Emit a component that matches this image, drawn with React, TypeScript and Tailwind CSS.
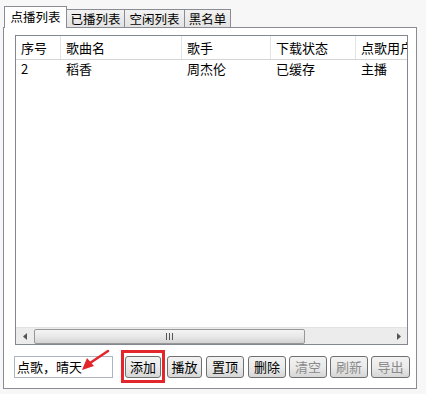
import React from "react";

const cols = [
  { name: "序号", w: 45 },
  { name: "歌曲名", w: 121 },
  { name: "歌手", w: 89 },
  { name: "下载状态", w: 85 },
  { name: "点歌用户", w: 60 },
];
const row = ["2", "稻香", "周杰伦", "已缓存", "主播"];

function Btn({ label, w, faded }: { label: string; w: string; faded?: boolean }) {
  return (
    <div
      className={`${w} h-[22px] shrink-0 flex items-center justify-center rounded-[3px] border border-[#707070] bg-gradient-to-b from-[#f2f2f2] via-[#ebebeb] to-[#d6d6d6] text-[13px] leading-[16px] ${
        faded ? "text-[#8a8a8a]" : "text-black"
      }`}
    >
      {label}
    </div>
  );
}

export default function App() {
  return (
    <div
      className="relative w-[426px] h-[394px] bg-[#f7f7f7] pt-[6px] pl-[3px] overflow-hidden"
      style={{ fontFamily: '"Noto Sans CJK SC", "Liberation Sans", sans-serif' }}
    >
      {/* tabs */}
      <div className="flex items-end h-[21px] relative z-10 text-[12.5px] leading-[16px]">
        <div className="ml-[1px] w-[63px] h-[22px] -mb-px bg-white border border-b-0 border-[#898c95] flex items-center justify-center pb-[1px]">
          点播列表
        </div>
        <div className="w-[58px] h-[18px] bg-gradient-to-b from-[#f2f2f2] to-[#e3e3e3] border border-l-0 border-b-0 border-[#898c95] flex items-center justify-center">
          已播列表
        </div>
        <div className="w-[60px] h-[18px] bg-gradient-to-b from-[#f2f2f2] to-[#e3e3e3] border border-l-0 border-b-0 border-[#898c95] flex items-center justify-center">
          空闲列表
        </div>
        <div className="w-[46px] h-[18px] bg-gradient-to-b from-[#f2f2f2] to-[#e3e3e3] border border-l-0 border-b-0 border-[#898c95] flex items-center justify-center">
          黑名单
        </div>
      </div>

      {/* panel */}
      <div className="w-[414px] h-[362px] bg-white border border-[#898c95] pt-[7px] pl-[11px]">
        {/* list box */}
        <div className="w-[393px] h-[310px] border border-[#828790] bg-white flex flex-col overflow-hidden">
          <div className="flex h-[24px] border-b border-[#d5d5d5] bg-white text-[13px] leading-[16px]">
            {cols.map((c, i) => (
              <div
                key={c.name}
                className={`shrink-0 h-full flex items-center pl-[5px] whitespace-nowrap ${
                  i < cols.length - 1 ? "border-r border-[#e3e3e3]" : ""
                }`}
                style={{ width: c.w }}
              >
                {c.name}
              </div>
            ))}
          </div>
          <div className="flex h-[18px] items-center text-[13px] leading-[16px]">
            {row.map((v, i) => (
              <div
                key={i}
                className="shrink-0 pl-[5px] whitespace-nowrap"
                style={{ width: cols[i].w }}
              >
                {v}
              </div>
            ))}
          </div>
          <div className="flex-1" />
          {/* scrollbar */}
          <div className="h-[17px] bg-[#ececec] border-t border-[#e2e2e2] flex items-center">
            <div className="w-[17px] h-full flex items-center justify-center">
              <svg width="4" height="7" viewBox="0 0 4 7">
                <path d="M4 0 L0 3.5 L4 7 Z" fill="#555" />
              </svg>
            </div>
            <div className="ml-[1px] w-[271px] h-[15px] rounded-[2px] border border-[#979797] bg-gradient-to-b from-[#f4f4f4] via-[#e8e8e8] to-[#d4d4d4] flex items-center justify-center">
              <svg width="8" height="7" viewBox="0 0 8 7">
                <path d="M0.5 0 V7 M3.5 0 V7 M6.5 0 V7" stroke="#555" strokeWidth="1" />
              </svg>
            </div>
            <div className="flex-1" />
            <div className="w-[17px] h-full flex items-center justify-center">
              <svg width="4" height="7" viewBox="0 0 4 7">
                <path d="M0 0 L4 3.5 L0 7 Z" fill="#555" />
              </svg>
            </div>
          </div>
        </div>

        {/* bottom row */}
        <div className="mt-[5px] flex items-center h-[33px]">
          <div className="-ml-[1px] w-[99px] h-[22px] border border-[#abb6c2] bg-white flex items-center pl-[2px] text-[13px] leading-[16px]">
            点歌，晴天
          </div>
          <div className="ml-[8px] w-[44px] h-[33px] border-[3px] border-[#e2262b] flex items-center justify-center">
            <Btn label="添加" w="w-[36px]" />
          </div>
          <div className="ml-[2px] flex gap-[4px]">
            <Btn label="播放" w="w-[35px]" />
            <Btn label="置顶" w="w-[38px]" />
            <Btn label="删除" w="w-[38px]" />
          </div>
          <div className="ml-[3px] flex gap-[3px]">
            <Btn label="清空" w="w-[38px]" faded />
            <Btn label="刷新" w="w-[38px]" faded />
            <Btn label="导出" w="w-[39px]" faded />
          </div>
        </div>
      </div>

      {/* red arrow overlay */}
      <svg className="absolute left-0 top-0 pointer-events-none" width="426" height="394">
        <path d="M108 351 L90 363" stroke="#e2262b" strokeWidth="2.5" strokeLinecap="round" />
        <path d="M82 370 L87 358 L94 366 Z" fill="#e2262b" />
      </svg>
    </div>
  );
}
